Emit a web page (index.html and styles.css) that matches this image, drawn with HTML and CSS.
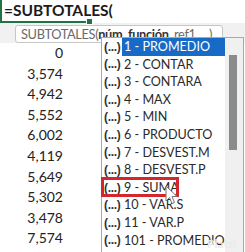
FILE: index.html
```html
<!doctype html>
<html>

<head>
    <title>SUBTOTALES</title>
    <link rel="stylesheet" href="styles.css">
</head>

<body>
    <div class="sheet">
        <div class="activeCell">=SUBTOTALES(</div>
        <div class="grayRow"></div>
        <ul class="values">
            <li>0</li>
            <li>3,574</li>
            <li>4,942</li>
            <li>5,552</li>
            <li>6,002</li>
            <li>4,119</li>
            <li>5,649</li>
            <li>5,302</li>
            <li>3,478</li>
            <li>7,574</li>
        </ul>
    </div>

    <div class="tooltip">SUBTOTALES(<b>núm_función</b>, ref1, ...)</div>

    <div class="dropdown">
        <ul class="options">
            <li class="option selected"><span class="arg">(...)</span><span class="label">1 - PROMEDIO</span></li>
            <li class="option"><span class="arg">(...)</span><span class="label">2 - CONTAR</span></li>
            <li class="option"><span class="arg">(...)</span><span class="label">3 - CONTARA</span></li>
            <li class="option"><span class="arg">(...)</span><span class="label">4 - MAX</span></li>
            <li class="option"><span class="arg">(...)</span><span class="label">5 - MIN</span></li>
            <li class="option"><span class="arg">(...)</span><span class="label">6 - PRODUCTO</span></li>
            <li class="option"><span class="arg">(...)</span><span class="label">7 - DESVEST.M</span></li>
            <li class="option"><span class="arg">(...)</span><span class="label">8 - DESVEST.P</span></li>
            <li class="option"><span class="arg">(...)</span><span class="label">9 - SUMA</span></li>
            <li class="option"><span class="arg">(...)</span><span class="label">10 - VAR.S</span></li>
            <li class="option"><span class="arg">(...)</span><span class="label">11 - VAR.P</span></li>
            <li class="option"><span class="arg">(...)</span><span class="label">101 - PROMEDIO</span></li>
        </ul>
        <div class="scrollTrack">
            <div class="scrollThumb"></div>
        </div>
    </div>

    <div class="highlight"></div>

    <svg class="pointer" width="13" height="21" viewBox="0 0 13 21">
        <path d="M1 1 L1 16 L4.5 12.5 L7 18.5 L9.5 17.5 L7 11.5 L12 11.5 Z" fill="#fff" stroke="#777" stroke-width="1" stroke-linejoin="round" />
    </svg>

    <span class="watermark">Platzi</span>
</body>

</html>
```

FILE: styles.css
```css
* {
    margin: 0;
    padding: 0;
    box-sizing: border-box;
}

body {
    width: 245px;
    height: 252px;
    overflow: hidden;
    position: relative;
    background-color: #fff;
    font-family: Lato, "Liberation Sans", sans-serif;
}

.sheet {
    display: flex;
    flex-direction: column;
}

.activeCell {
    width: 90px;
    height: 23px;
    border-left: solid 2px #217346;
    border-bottom: solid 2px #217346;
    padding-left: 2px;
    font-size: 15.5px;
    font-weight: 700;
    line-height: 21px;
    color: #1b1b1b;
    white-space: nowrap;
    position: relative;
}

.activeCell::after {
    content: '';
    position: absolute;
    right: -3px;
    bottom: -4px;
    width: 5px;
    height: 5px;
    background-color: #217346;
    border: solid 1px #fff;
}

.grayRow {
    height: 20px;
    background-color: #f1f1f1;
}

.values {
    list-style: none;
    width: 63px;
}

.values li {
    height: 20.6px;
    line-height: 20.6px;
    text-align: right;
    font-size: 14px;
    color: #222;
}

.tooltip {
    position: absolute;
    left: 15px;
    top: 25px;
    width: 208px;
    height: 18px;
    border: solid 1px #c6c6c6;
    border-radius: 3px;
    background-color: #fff;
    padding-left: 5px;
    font-size: 12.8px;
    line-height: 16px;
    letter-spacing: -0.35px;
    color: #6a6a6a;
    white-space: nowrap;
}

.tooltip b {
    color: #333;
}

.dropdown {
    position: absolute;
    left: 101px;
    top: 37px;
    width: 143px;
    height: 220px;
    border: solid 1px #a9a9a9;
    background-color: #fff;
    display: flex;
}

.options {
    list-style: none;
    flex: 1;
}

.option {
    display: flex;
    height: 17.6px;
    align-items: center;
}

.arg {
    width: 20px;
    padding-left: 2px;
    font-family: "Liberation Sans", sans-serif;
    font-size: 12px;
    font-weight: 700;
    letter-spacing: -0.3px;
    color: #333;
}

.label {
    flex: 1;
    height: 100%;
    padding-left: 2px;
    font-size: 12.6px;
    line-height: 17.6px;
    color: #2a2a2a;
    white-space: nowrap;
}

.selected .label {
    background-color: #176ac6;
    color: #fff;
}

.scrollTrack {
    width: 18px;
    background-color: #f0f0f0;
    padding: 17px 4px 0 4px;
}

.scrollThumb {
    width: 8px;
    height: 95px;
    background-color: #8b8b8b;
}

.highlight {
    position: absolute;
    left: 101px;
    top: 177px;
    width: 78px;
    height: 20px;
    border: solid 3px #d3262d;
}

.pointer {
    position: absolute;
    left: 165px;
    top: 185px;
}

.watermark {
    position: absolute;
    left: 207px;
    top: 236px;
    font-size: 12px;
    font-weight: 700;
    color: #ebebeb;
}
```
